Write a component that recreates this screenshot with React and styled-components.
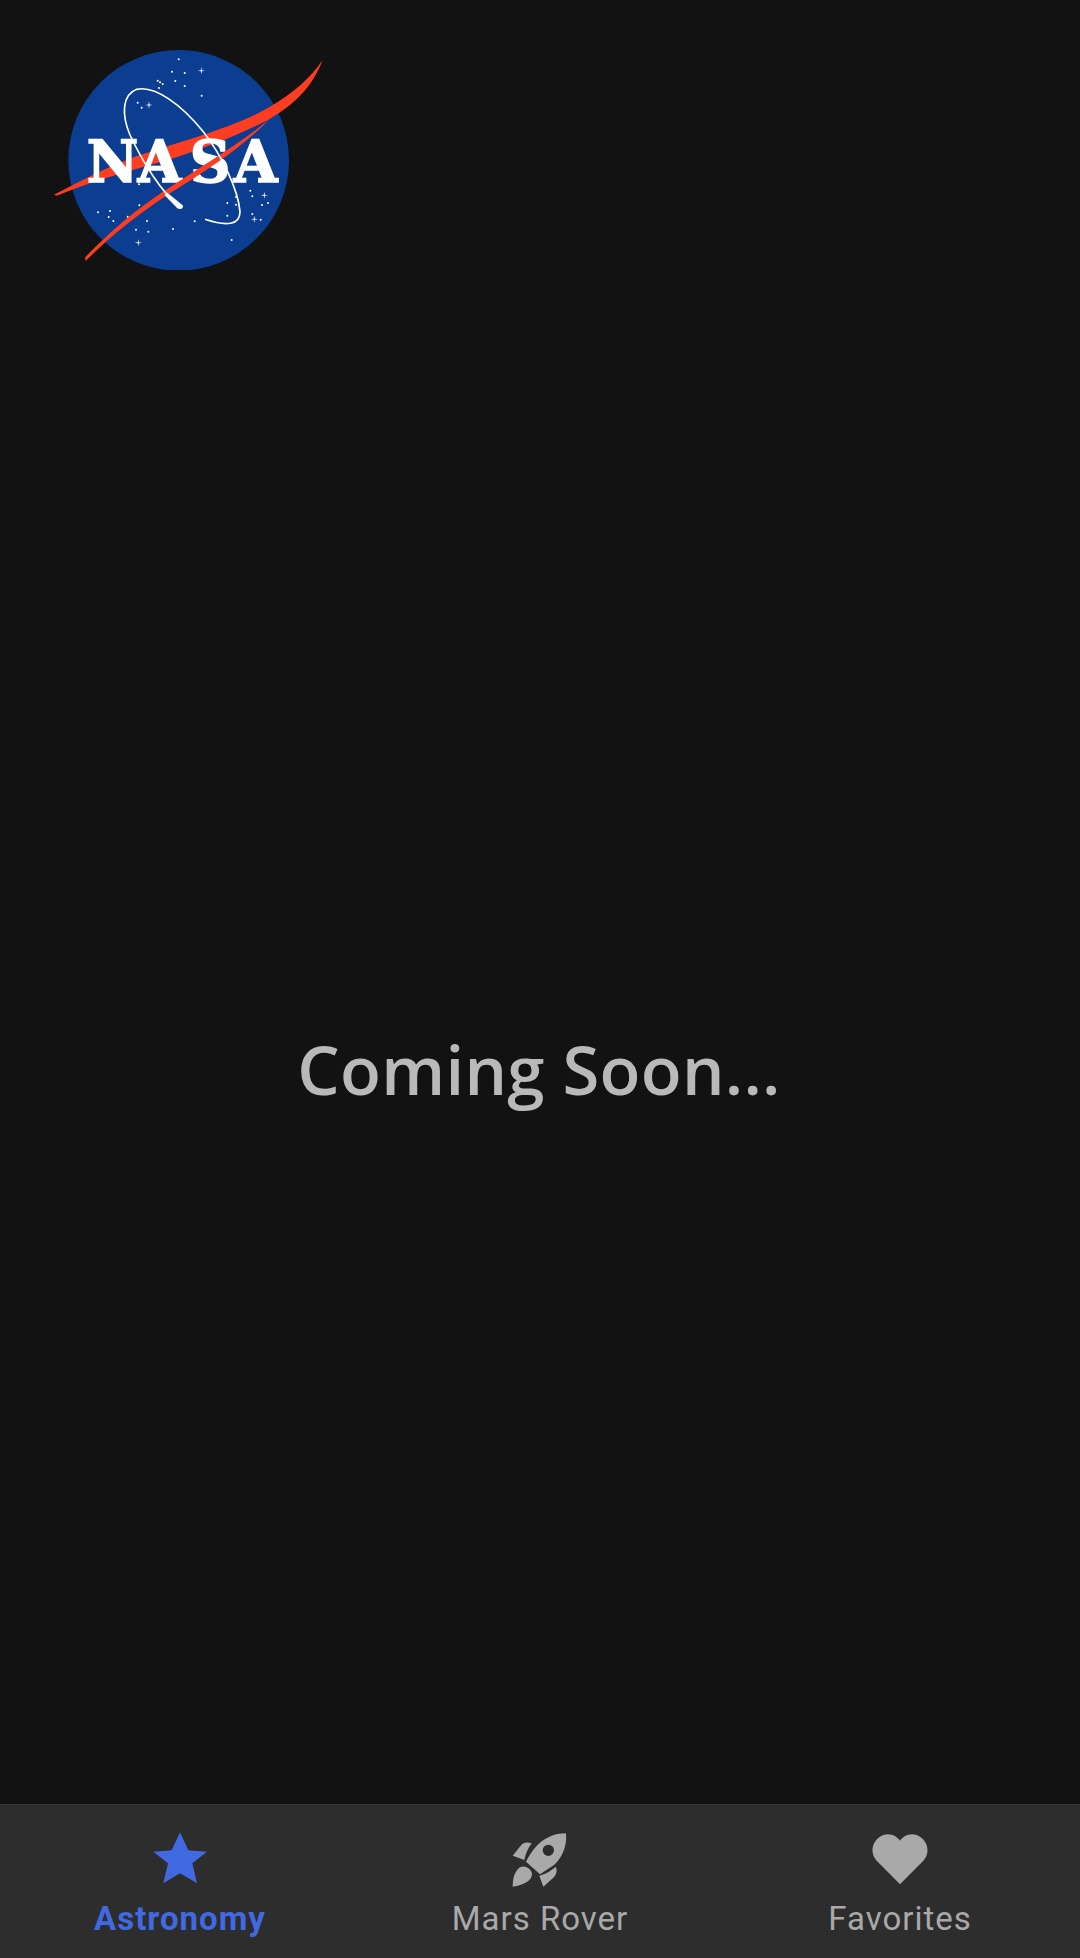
import React from 'react';
import styled, { createGlobalStyle } from 'styled-components';

const GlobalStyle = createGlobalStyle`
  html, body {
    margin: 0;
    padding: 0;
    background: #121212;
  }
`;

const Screen = styled.div`
  width: 1080px;
  height: 1958px;
  display: flex;
  flex-direction: column;
  background: #121212;
`;

const Header = styled.header`
  padding: 40px 0 64px 50px;
  height: 230px;
  flex: none;
`;

const Main = styled.main`
  flex: 1;
  display: flex;
  align-items: center;
  justify-content: center;
`;

const Title = styled.h1`
  margin: 0;
  font-family: "Open Sans", "Noto Sans", sans-serif;
  font-size: 67px;
  font-weight: 600;
  letter-spacing: 0.3px;
  padding-right: 2px;
  color: #b9b9b9;
`;

const TabBar = styled.nav`
  flex: none;
  height: 154px;
  box-sizing: border-box;
  display: grid;
  grid-template-columns: repeat(3, 1fr);
  background: #2d2d2d;
  border-top: 1px solid #363636;
`;

const Tab = styled.div`
  display: flex;
  flex-direction: column;
  align-items: center;
  padding-top: 27px;
  color: ${(p) => (p.$active ? '#4169e1' : '#a9a9a9')};

  svg {
    display: block;
    width: 56px;
    height: 56px;
    fill: currentColor;
  }
`;

const TabLabel = styled.span`
  margin-top: 11px;
  font-family: Roboto, "Liberation Sans", sans-serif;
  font-size: 33px;
  line-height: 40px;
  letter-spacing: 1px;
  font-weight: ${(p) => (p.$active ? 700 : 400)};
`;

const dots = [
  [446, 88], [426, 125], [464, 129], [436, 153], [464, 168], [515, 197], [383, 152], [390, 157],
  [398, 162], [387, 174], [323, 218], [335, 233], [327, 463], [328, 526], [204, 547], [240, 543],
  [236, 561], [250, 573], [293, 560], [351, 573], [318, 599], [355, 605], [429, 597], [494, 574],
  [605, 630], [592, 519], [618, 501], [618, 524], [592, 557], [661, 482], [667, 499], [696, 525],
  [714, 519], [667, 552], [692, 569],
];

const sparkles = [[514, 122], [357, 225], [325, 638], [703, 496], [673, 568]];

const NasaLogo = () => (
  <svg width="280" height="230" viewBox="60 30 840 690" role="img" aria-label="NASA">
    <circle cx="446" cy="391" r="331" fill="#0b3d91" />
    {dots.map(([x, y]) => (
      <circle key={`${x}-${y}`} cx={x} cy={y} r="3" fill="#fff" />
    ))}
    {sparkles.map(([x, y]) => (
      <path
        key={`${x}-${y}`}
        d={`M${x} ${y - 11}L${x + 1.6} ${y - 1.6}L${x + 11} ${y}L${x + 1.6} ${y + 1.6}L${x} ${y + 11}L${x - 1.6} ${y + 1.6}L${x - 11} ${y}L${x - 1.6} ${y - 1.6}Z`}
        fill="#fff"
      />
    ))}
    <path
      d="M72 494C150 455 230 410 330 375C450 335 620 290 720 230C790 190 840 145 878 90C845 175 790 225 720 266C620 320 520 355 430 385C330 415 210 445 80 497Z"
      fill="#fc3d21"
    />
    <text
      x="0 160 322 460"
      y="0"
      transform="translate(170 455) scale(0.96 1)"
      fontFamily="'DejaVu Serif', serif"
      fontWeight="700"
      fontSize="176"
      fill="#fff"
      stroke="#fff"
      strokeWidth="5"
    >
      NASA
    </text>
    <path
      d="M720 266C640 350 535 418 420 490C320 555 235 625 167 693L165 682C235 610 315 540 410 478C520 405 630 340 720 266Z"
      fill="#fc3d21"
    />
    <path
      d="M450 530C395 490 335 390 300 315C275 255 275 195 320 178C375 165 455 225 520 305C575 375 625 480 630 545C630 585 590 590 525 568"
      fill="none"
      stroke="#fff"
      strokeWidth="5"
    />
    <path d="M412 488L458 526C462 536 450 540 442 535L404 496Z" fill="#fff" />
  </svg>
);

const StarIcon = () => (
  <svg viewBox="201 36 168 168">
    <path d="M285 37L310 91L366 95L322 130L336 190L285 160L235 190L249 130L205 95L260 91Z" />
  </svg>
);

const RocketIcon = () => (
  <svg viewBox="66 51 168 168">
    <path
      fillRule="evenodd"
      d="M228 55C232 95 215 130 192 150L150 178L108 140C125 105 150 75 185 62C200 57 215 55 228 55ZM175 89A17 17 0 1 0 175 123A17 17 0 1 0 175 89Z"
    />
    <path d="M125 85C108 80 100 83 92 92L68 122L103 135C107 115 114 100 125 85Z" />
    <path d="M198 155C202 170 198 180 190 188L160 215L148 182C167 177 183 167 198 155Z" />
    <path d="M68 215C68 195 72 170 90 157C105 150 122 160 126 176C126 190 115 200 100 206C90 210 78 214 68 215Z" />
  </svg>
);

const HeartIcon = () => (
  <svg viewBox="156 36 168 168">
    <path d="M240 193L170 122C148 98 155 60 190 45C210 38 230 48 240 62C250 48 270 38 290 45C325 60 332 98 310 122Z" />
  </svg>
);

const tabs = [
  { label: 'Astronomy', icon: StarIcon, active: true },
  { label: 'Mars Rover', icon: RocketIcon },
  { label: 'Favorites', icon: HeartIcon },
];

const App = () => (
  <Screen>
    <GlobalStyle />
    <Header>
      <NasaLogo />
    </Header>
    <Main>
      <Title>Coming Soon...</Title>
    </Main>
    <TabBar>
      {tabs.map(({ label, icon: Icon, active }) => (
        <Tab key={label} $active={active}>
          <Icon />
          <TabLabel $active={active}>{label}</TabLabel>
        </Tab>
      ))}
    </TabBar>
  </Screen>
);

export default App;
